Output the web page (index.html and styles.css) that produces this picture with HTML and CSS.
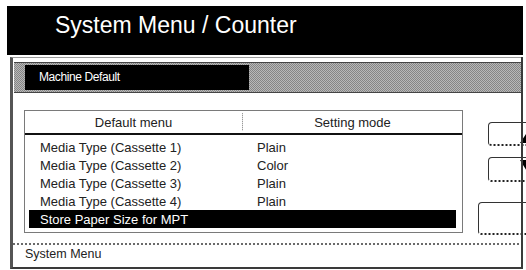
FILE: index.html
```html
<!DOCTYPE html>
<html>
<head>
<meta charset="utf-8">
<title>System Menu / Counter</title>
<link rel="stylesheet" href="styles.css">
</head>
<body>
<div class="screen">
  <div class="titlebar">System Menu / Counter</div>
  <div class="panel">
    <div class="band"><div class="tab">Machine Default</div></div>
    <div class="main">
      <div class="table">
        <div class="thead">
          <div class="th th-menu">Default menu</div>
          <div class="th-sep"></div>
          <div class="th th-mode">Setting mode</div>
        </div>
        <div class="tbody">
          <div class="row"><span class="c1">Media Type (Cassette 1)</span><span class="c2">Plain</span></div>
          <div class="row"><span class="c1">Media Type (Cassette 2)</span><span class="c2">Color</span></div>
          <div class="row"><span class="c1">Media Type (Cassette 3)</span><span class="c2">Plain</span></div>
          <div class="row"><span class="c1">Media Type (Cassette 4)</span><span class="c2">Plain</span></div>
          <div class="row sel"><span class="c1">Store Paper Size for MPT</span></div>
        </div>
      </div>
      <div class="side">
        <div class="btn btn-up"><svg class="tri" width="16" height="12" viewBox="0 0 16 12"><polygon points="0,12 8,0 16,12" fill="#000"/></svg></div>
        <div class="btn btn-down"><svg class="tri" width="16" height="13" viewBox="0 0 16 13"><polygon points="0,0 16,0 8,13" fill="#000"/></svg></div>
        <div class="btn btn-big"></div>
      </div>
    </div>
    <div class="footer">System Menu</div>
  </div>
</div>
</body>
</html>
```
FILE: styles.css
```css
body {
  margin: 0;
  background: #fff;
  width: 526px;
  height: 270px;
  overflow: hidden;
  font-family: "Liberation Sans", Arial, sans-serif;
  color: #1a1a1a;
}

.screen {
  padding: 6px 0 0 7px;
}

.titlebar {
  width: 516px;
  height: 49px;
  box-sizing: border-box;
  background: #000;
  color: #fff;
  font-size: 23px;
  line-height: 39px;
  padding-left: 48px;
}

.panel {
  position: relative;
  margin: 2px 0 0 3px;
  width: 513px;
  height: 212px;
  box-sizing: border-box;
  border-top: 1px solid #9a9a9a;
  border-left: 3px solid #555;
  border-bottom: 2px solid #3a3a3a;
  display: flex;
  flex-direction: column;
}

.panel::after {
  content: "";
  position: absolute;
  right: 0;
  top: -1px;
  bottom: -2px;
  width: 2px;
  background: #3a3a3a;
  z-index: 2;
}

.band {
  margin: 4px 0 0 1px;
  height: 31px;
  box-sizing: border-box;
  border-top: 1px solid #444;
  border-bottom: 1px solid #444;
  background: repeating-conic-gradient(#858585 0 25%, #b8b8b8 0 50%) 0 0 / 2px 2px;
  padding: 2px 0 0 11px;
}

.tab {
  width: 224px;
  height: 25px;
  box-sizing: border-box;
  background: #000;
  color: #fff;
  font-size: 12px;
  line-height: 25px;
  padding-left: 14px;
  letter-spacing: -0.4px;
}

.main {
  height: 150px;
  display: flex;
  align-items: flex-start;
}

.table {
  flex-shrink: 0;
  margin: 17px 0 0 11px;
  width: 439px;
  height: 123px;
  box-sizing: border-box;
  border: 1px solid #7a7a7a;
}

.thead {
  height: 22px;
  display: flex;
  align-items: center;
  border-bottom: 2px solid #111;
  font-size: 13px;
  color: #222;
}

.th-menu {
  width: 217px;
  text-align: center;
}

.th-sep {
  width: 1px;
  height: 18px;
  background: repeating-linear-gradient(180deg, #9a9a9a 0 1px, #e0e0e0 1px 2px);
}

.th-mode {
  flex: 1;
  text-align: center;
}

.tbody {
  padding: 3px 6px 4px 4px;
}

.row {
  height: 18px;
  display: flex;
  align-items: center;
  padding-left: 11px;
  font-size: 13px;
  color: #222;
}

.c1 {
  width: 217px;
}

.sel {
  background: #000;
  color: #fff;
}

.side {
  flex-shrink: 0;
  width: 70px;
  margin: 29px 0 0 15px;
  display: flex;
  flex-direction: column;
}

.btn {
  box-sizing: border-box;
  background: #fff;
  border: 1px solid #333;
  border-bottom: 2px dotted #222;
  border-radius: 4px;
  display: flex;
}

.btn-up {
  margin-left: 10px;
  height: 24px;
  align-items: flex-end;
  padding: 0 0 1px 31px;
}

.btn-down {
  margin: 11px 0 0 10px;
  height: 25px;
  align-items: flex-start;
  padding: 2px 0 0 31px;
}

.btn-big {
  margin-top: 20px;
  height: 33px;
}

.tri {
  display: block;
}

.footer {
  flex: 1;
  border-top: 2px dotted #6a6a6a;
  font-size: 12.5px;
  line-height: 19px;
  padding-left: 12px;
  color: #222;
}
```
